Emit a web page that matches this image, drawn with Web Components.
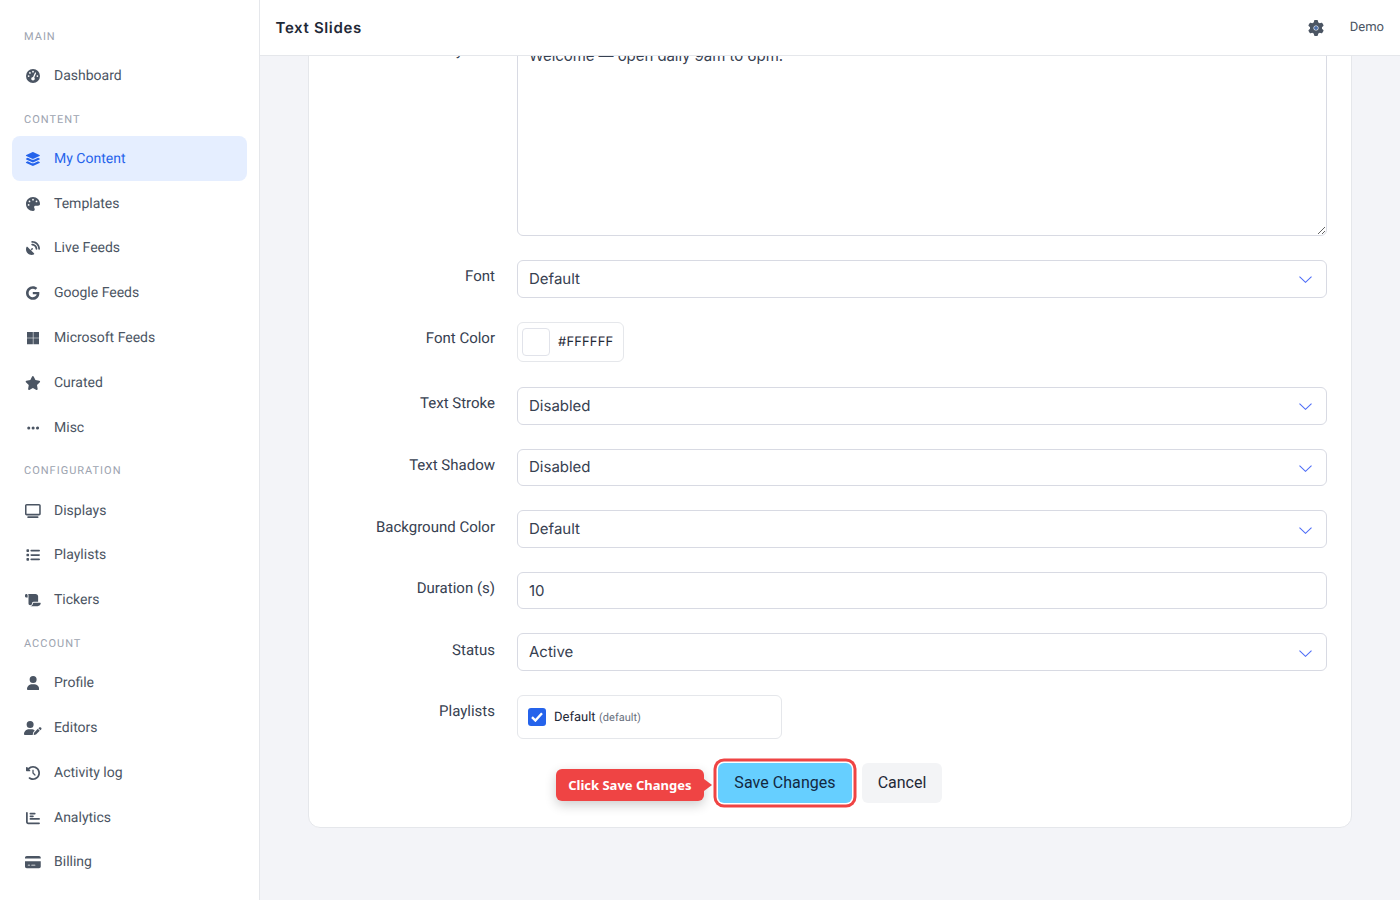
<!DOCTYPE html>
<html lang="en">
<head>
<meta charset="utf-8">
<title>Text Slides</title>
<style>
html, body { margin: 0; height: 100%; }
body { font-family: Roboto, "Liberation Sans", sans-serif; background: #f3f4f8; overflow: hidden; text-rendering: geometricPrecision; }
</style>
</head>
<body>
<app-shell>
  <side-nav slot="side">
    <nav-section label="MAIN" first>
      <nav-item icon="gauge">Dashboard</nav-item>
    </nav-section>
    <nav-section label="CONTENT">
      <nav-item icon="layers" active>My Content</nav-item>
      <nav-item icon="palette">Templates</nav-item>
      <nav-item icon="dish">Live Feeds</nav-item>
      <nav-item icon="google">Google Feeds</nav-item>
      <nav-item icon="windows">Microsoft Feeds</nav-item>
      <nav-item icon="star">Curated</nav-item>
      <nav-item icon="dots">Misc</nav-item>
    </nav-section>
    <nav-section label="CONFIGURATION">
      <nav-item icon="desktop">Displays</nav-item>
      <nav-item icon="list">Playlists</nav-item>
      <nav-item icon="scroll">Tickers</nav-item>
    </nav-section>
    <nav-section label="ACCOUNT">
      <nav-item icon="user">Profile</nav-item>
      <nav-item icon="useredit">Editors</nav-item>
      <nav-item icon="history">Activity log</nav-item>
      <nav-item icon="chart">Analytics</nav-item>
      <nav-item icon="card">Billing</nav-item>
      <nav-item icon="user"></nav-item>
    </nav-section>
  </side-nav>
  <top-bar slot="top" heading="Text Slides" account="Demo"></top-bar>
  <form-card>
    <form-row label="Body Text" style="--label-top:3.5px"><text-area-field>Welcome — open daily 9am to 6pm.</text-area-field></form-row>
    <form-row label="Font"><select-field>Default</select-field></form-row>
    <form-row label="Font Color" style="--row-gap:25.4px"><color-field value="#FFFFFF"></color-field></form-row>
    <form-row label="Text Stroke"><select-field>Disabled</select-field></form-row>
    <form-row label="Text Shadow"><select-field>Disabled</select-field></form-row>
    <form-row label="Background Color"><select-field>Default</select-field></form-row>
    <form-row label="Duration (s)"><text-field>10</text-field></form-row>
    <form-row label="Status"><select-field>Active</select-field></form-row>
    <form-row label="Playlists"><check-field note="(default)">Default</check-field></form-row>
    <form-actions></form-actions>
  </form-card>
</app-shell>

<script>
const ICONS = {
  gauge: ["0 0 512 512", "M0 256a256 256 0 1 1 512 0A256 256 0 1 1 0 256zM288 96a32 32 0 1 0 -64 0 32 32 0 1 0 64 0zM256 416c35.3 0 64-28.7 64-64c0-17.4-6.9-33.1-18.1-44.6L366 161.7c5.3-12.1-.2-26.3-12.3-31.6s-26.3 .2-31.6 12.3L257.9 288c-.6 0-1.3 0-1.9 0c-35.3 0-64 28.7-64 64s28.7 64 64 64zM176 144a32 32 0 1 0 -64 0 32 32 0 1 0 64 0zM96 288a32 32 0 1 0 0-64 32 32 0 1 0 0 64zm352-32a32 32 0 1 0 -64 0 32 32 0 1 0 64 0z"],
  layers: ["0 0 576 512", "M264.5 5.2c14.9-6.9 32.1-6.9 47 0l218.6 101c8.5 3.9 13.9 12.4 13.9 21.8s-5.4 17.9-13.9 21.8l-218.6 101c-14.9 6.9-32.1 6.9-47 0L45.9 149.8C37.4 145.8 32 137.3 32 128s5.4-17.9 13.9-21.8L264.5 5.2zM476.9 209.6l53.2 24.6c8.5 3.9 13.9 12.4 13.9 21.8s-5.4 17.9-13.9 21.8l-218.6 101c-14.9 6.9-32.1 6.9-47 0L45.9 277.8C37.4 273.8 32 265.3 32 256s5.4-17.9 13.9-21.8l53.2-24.6 152 70.2c23.4 10.8 50.4 10.8 73.8 0l152-70.2zm-152 198.2l152-70.2 53.2 24.6c8.5 3.9 13.9 12.4 13.9 21.8s-5.4 17.9-13.9 21.8l-218.6 101c-14.9 6.9-32.1 6.9-47 0L45.9 405.8C37.4 401.8 32 393.3 32 384s5.4-17.9 13.9-21.8l53.2-24.6 152 70.2c23.4 10.8 50.4 10.8 73.8 0z"],
  palette: ["0 0 512 512", "M512 256c0 .9 0 1.8 0 2.7c-.4 36.5-33.6 61.3-70.1 61.3H344c-26.5 0-48 21.5-48 48c0 3.4 .4 6.7 1 9.9c2.1 10.2 6.5 20 10.8 29.9c6.1 13.8 12.1 27.5 12.1 42c0 31.8-21.6 60.7-53.4 62c-3.5 .1-7 .2-10.6 .2C114.6 512 0 397.4 0 256S114.6 0 256 0S512 114.6 512 256zM128 288a32 32 0 1 0 -64 0 32 32 0 1 0 64 0zm0-96a32 32 0 1 0 0-64 32 32 0 1 0 0 64zM288 96a32 32 0 1 0 -64 0 32 32 0 1 0 64 0zm96 96a32 32 0 1 0 0-64 32 32 0 1 0 0 64z"],
  dish: ["0 0 512 512", "M192 32c0-17.7 14.3-32 32-32C383.1 0 512 128.9 512 288c0 17.7-14.3 32-32 32s-32-14.3-32-32C448 164.3 347.7 64 224 64c-17.7 0-32-14.3-32-32zM60.6 220.6L164.7 324.7l28.4-28.4c-.7-2.6-1.1-5.4-1.1-8.3c0-17.7 14.3-32 32-32s32 14.3 32 32s-14.3 32-32 32c-2.9 0-5.6-.4-8.3-1.1l-28.4 28.4L291.4 451.4c14.5 14.5 11.8 38.8-7.3 46.3C260.5 506.9 234.9 512 208 512C93.1 512 0 418.9 0 304c0-26.9 5.1-52.5 14.3-76.1c7.5-19.1 31.8-21.8 46.3-7.3zM224 96c106 0 192 86 192 192c0 17.7-14.3 32-32 32s-32-14.3-32-32c0-70.7-57.3-128-128-128c-17.7 0-32-14.3-32-32s14.3-32 32-32z"],
  google: ["0 0 488 512", "M488 261.8C488 403.3 391.1 504 248 504 110.8 504 0 393.2 0 256S110.8 8 248 8c66.8 0 123 24.5 166.3 64.9l-67.5 64.9C258.5 52.6 94.3 116.6 94.3 256c0 86.5 69.1 156.6 153.7 156.6 98.2 0 135-70.4 140.8-106.9H248v-85.3h236.1c2.3 12.7 3.9 24.9 3.9 41.4z"],
  windows: ["0 0 448 512", "M0 32h214v214H0zM234 32h214v214H234zM0 266h214v214H0zM234 266h214v214H234z"],
  star: ["0 0 576 512", "M316.9 18C311.6 7 300.4 0 288.1 0s-23.4 7-28.8 18L195 150.3 51.4 171.5c-12 1.8-22 10.2-25.7 21.7s-.7 24.2 7.9 32.7L137.8 329 113.2 474.7c-2 12 3 24.2 12.9 31.3s23 8 33.8 2.3l128.3-68.5 128.3 68.5c10.8 5.7 23.9 4.9 33.8-2.3s14.9-19.3 12.9-31.3L438.5 329 542.7 225.9c8.6-8.5 11.7-21.2 7.9-32.7s-13.7-19.9-25.7-21.7L381.2 150.3 316.9 18z"],
  dots: ["0 0 448 512", "M8 256a56 56 0 1 1 112 0A56 56 0 1 1 8 256zm160 0a56 56 0 1 1 112 0A56 56 0 1 1 168 256zm216-56a56 56 0 1 1 0 112 56 56 0 1 1 0-112z"],
  desktop: ["0 0 576 512", "M64 0C28.7 0 0 28.7 0 64V352c0 35.3 28.7 64 64 64H512c35.3 0 64-28.7 64-64V64c0-35.3-28.7-64-64-64H64zM64 56H512c4.4 0 8 3.6 8 8V352c0 4.4-3.6 8-8 8H64c-4.4 0-8-3.6-8-8V64c0-4.4 3.6-8 8-8zM112 448H464c17.7 0 32 14.3 32 32s-14.3 32-32 32H112c-17.700 0-32-14.300-32-32s14.300-32 32-32z"],
  list: ["0 0 512 512", "M40 48C26.700 48 16 58.700 16 72v48c0 13.300 10.700 24 24 24H88c13.300 0 24-10.700 24-24V72c0-13.300-10.700-24-24-24H40zM192 64c-17.700 0-32 14.300-32 32s14.300 32 32 32H480c17.700 0 32-14.300 32-32s-14.300-32-32-32H192zm0 160c-17.700 0-32 14.300-32 32s14.300 32 32 32H480c17.700 0 32-14.300 32-32s-14.300-32-32-32H192zm0 160c-17.700 0-32 14.300-32 32s14.300 32 32 32H480c17.700 0 32-14.300 32-32s-14.300-32-32-32H192zM16 232v48c0 13.300 10.700 24 24 24H88c13.300 0 24-10.700 24-24V232c0-13.300-10.700-24-24-24H40c-13.300 0-24 10.700-24 24zM40 368c-13.300 0-24 10.700-24 24v48c0 13.300 10.700 24 24 24H88c13.300 0 24-10.700 24-24V392c0-13.300-10.700-24-24-24H40z"],
  scroll: ["0 0 576 512", "M0 80v48c0 17.7 14.3 32 32 32H48 96V80c0-26.5-21.5-48-48-48S0 53.5 0 80zM112 32c10 13.4 16 30 16 48V384c0 35.3 28.7 64 64 64s64-28.7 64-64v-5.3c0-32.4 26.3-58.7 58.7-58.7H480V128c0-53-43-96-96-96H112zM464 480c61.9 0 112-50.1 112-112c0-8.8-7.2-16-16-16H314.7c-14.7 0-26.7 11.9-26.7 26.7V384c0 53-43 96-96 96H368h96z"],
  user: ["0 0 448 512", "M224 256A128 128 0 1 0 224 0a128 128 0 1 0 0 256zm-45.7 48C79.8 304 0 383.8 0 482.3C0 498.7 13.3 512 29.7 512H418.3c16.4 0 29.7-13.3 29.7-29.7C448 383.8 368.2 304 269.7 304H178.3z"],
  useredit: ["0 0 640 512", "M224 256A128 128 0 1 0 224 0a128 128 0 1 0 0 256zm-45.7 48C79.8 304 0 383.8 0 482.3C0 498.7 13.3 512 29.7 512H322.8c-3.1-8.8-3.7-18.4-1.4-27.8l15-60.1c2.8-11.3 8.6-21.5 16.8-29.7l40.3-40.3c-32.1-31-75.7-50.1-123.9-50.1H178.3zm435.5-68.3c-15.6-15.6-40.9-15.6-56.6 0l-29.4 29.4 71 71 29.4-29.4c15.6-15.6 15.6-40.9 0-56.6l-14.4-14.4zM375.9 417c-4.1 4.1-7 9.2-8.4 14.9l-15 60.1c-1.4 5.5 .2 11.2 4.2 15.2s9.7 5.6 15.2 4.2l60.1-15c5.6-1.4 10.8-4.3 14.9-8.4L576.1 358.7l-71-71L375.9 417z"],
  history: ["0 0 512 512", "M75 75L41 41C25.9 25.9 0 36.6 0 57.9V168c0 13.3 10.7 24 24 24H134.1c21.4 0 32.1-25.9 17-41l-30.8-30.8C155 85.5 203 64 256 64c106 0 192 86 192 192s-86 192-192 192c-40.8 0-78.6-12.7-109.7-34.4c-14.5-10.1-34.4-6.6-44.6 7.9s-6.6 34.4 7.9 44.6C151.2 495 201.7 512 256 512c141.4 0 256-114.6 256-256S397.4 0 256 0C185.3 0 121.3 28.7 75 75zm181 53c-13.3 0-24 10.7-24 24V256c0 6.4 2.5 12.5 7 17l72 72c9.4 9.4 24.6 9.4 33.9 0s9.4-24.6 0-33.9l-65-65V152c0-13.3-10.7-24-24-24z"],
  chart: ["0 0 512 512", "M32 32c17.7 0 32 14.3 32 32V400c0 8.8 7.2 16 16 16H480c17.7 0 32 14.3 32 32s-14.3 32-32 32H80c-44.2 0-80-35.8-80-80V64C0 46.3 14.3 32 32 32zm96 64c0-17.7 14.3-32 32-32H320c17.7 0 32 14.300 32 32s-14.300 32-32 32H160c-17.7 0-32-14.300-32-32zm32 64H256c17.700 0 32 14.300 32 32s-14.300 32-32 32H160c-17.700 0-32-14.300-32-32s14.300-32 32-32zm0 96H480c17.700 0 32 14.300 32 32s-14.300 32-32 32H160c-17.700 0-32-14.300-32-32s14.300-32 32-32z"],
  card: ["0 0 576 512", "M64 32C28.7 32 0 60.7 0 96v32H576V96c0-35.3-28.7-64-64-64H64zM576 224H0V416c0 35.3 28.7 64 64 64H512c35.3 0 64-28.7 64-64V224zM112 352h64c8.8 0 16 7.2 16 16s-7.2 16-16 16H112c-8.8 0-16-7.2-16-16s7.2-16 16-16zm112 16c0-8.8 7.2-16 16-16H368c8.8 0 16 7.2 16 16s-7.2 16-16 16H240c-8.8 0-16-7.2-16-16z"],
  gear: ["0 0 512 512", "M495.9 166.6c3.2 8.7 .5 18.4-6.4 24.6l-43.3 39.4c1.1 8.3 1.7 16.8 1.7 25.4s-.6 17.1-1.7 25.4l43.3 39.4c6.9 6.2 9.6 15.9 6.4 24.6c-4.4 11.9-9.7 23.3-15.8 34.3l-4.7 8.1c-6.6 11-14 21.4-22.1 31.2c-5.9 7.2-15.7 9.6-24.5 6.8l-55.7-17.7c-13.4 10.3-28.2 18.9-44 25.4l-12.5 57.1c-2 9.1-9 16.3-18.2 17.8c-13.8 2.3-28 3.5-42.5 3.5s-28.7-1.2-42.5-3.5c-9.2-1.5-16.2-8.7-18.2-17.8l-12.5-57.1c-15.8-6.5-30.6-15.1-44-25.4L83.1 425.9c-8.8 2.8-18.6 .3-24.5-6.8c-8.1-9.8-15.5-20.2-22.1-31.2l-4.7-8.1c-6.1-11-11.4-22.4-15.8-34.3c-3.2-8.7-.5-18.4 6.4-24.6l43.3-39.4C64.6 273.1 64 264.6 64 256s.6-17.1 1.7-25.4L22.4 191.2c-6.9-6.2-9.6-15.9-6.4-24.6c4.4-11.9 9.7-23.3 15.8-34.3l4.7-8.1c6.6-11 14-21.4 22.1-31.2c5.9-7.2 15.7-9.6 24.5-6.8l55.7 17.7c13.4-10.3 28.2-18.9 44-25.4l12.5-57.1c2-9.1 9-16.3 18.2-17.8C227.3 1.2 241.5 0 256 0s28.7 1.2 42.5 3.5c9.2 1.5 16.2 8.7 18.2 17.8l12.5 57.1c15.8 6.5 30.6 15.1 44 25.4l55.7-17.7c8.8-2.8 18.6-.3 24.5 6.8c8.1 9.8 15.5 20.2 22.1 31.2l4.7 8.1c6.1 11 11.4 22.4 15.8 34.3zM256 336a80 80 0 1 0 0-160 80 80 0 1 0 0 160z"]
};

function iconSvg(name, height) {
  const [box, d] = ICONS[name];
  const [, , w, h] = box.split(" ").map(Number);
  return `<svg viewBox="${box}" width="${height * w / h}" height="${height}" fill="currentColor" aria-hidden="true"><path d="${d}"/></svg>`;
}

// small base class, every element just renders a string once
class Base extends HTMLElement {
  constructor() {
    super();
    this.attachShadow({mode: "open"});
  }
  connectedCallback() {
    this.shadowRoot.innerHTML = this.render();
  }
}

customElements.define("app-shell", class extends Base {
  render() {
    return `<style>
      :host { display: grid; grid-template-columns: 260px 1fr; grid-template-rows: 56px 1fr; height: 100vh; overflow: hidden; }
      .side { grid-row: 1 / 3; min-height: 0; overflow: hidden; }
      main { display: flex; flex-direction: column; justify-content: flex-end; min-height: 0; overflow: hidden; padding: 0 48px 72px; }
    </style>
    <div class="side"><slot name="side"></slot></div>
    <slot name="top"></slot>
    <main><slot></slot></main>`;
  }
});

customElements.define("side-nav", class extends Base {
  render() {
    return `<style>
      :host { display: block; box-sizing: border-box; width: 260px; height: 100%; padding: 15.300px 12px 0; background: #fff; border-right: 1px solid #e5e7eb; overflow: hidden; }
    </style><slot></slot>`;
  }
});

customElements.define("nav-section", class extends Base {
  render() {
    return `<style>
      :host { display: block; }
      h3 { margin: 0; padding: 14.300px 12px 10.900px; font: 400 11px/13px Roboto, sans-serif; letter-spacing: 1px; color: #9ca3af; }
    </style><h3>${this.getAttribute("label")}</h3><slot></slot>`;
  }
});

customElements.define("nav-item", class extends Base {
  render() {
    return `<style>
      :host { display: flex; align-items: center; gap: 12px; height: 44.800px; padding-left: 12px; box-sizing: border-box; border-radius: 8px; font: 400 14px Roboto, sans-serif; color: #4b5563; }
      :host([active]) { background: #e5eeff; color: #2563eb; }
      .ic { display: flex; justify-content: center; align-items: center; width: 18px; flex: none; }
    </style><span class="ic">${iconSvg(this.getAttribute("icon"), 14)}</span><slot></slot>`;
  }
});

customElements.define("top-bar", class extends Base {
  render() {
    return `<style>
      :host { display: flex; align-items: center; box-sizing: border-box; height: 56px; padding: 0 16px 0 15.500px; background: #fff; border-bottom: 1px solid #e5e7eb; position: relative; z-index: 1; }
      h1 { flex: 1; margin: 0; font: 600 15px Inter, sans-serif; letter-spacing: .65px; color: #1f2937; }
      .gear { display: flex; position: relative; color: #4b5563; margin-right: 26px; }
      .gear i { position: absolute; left: 6px; top: 6px; width: 4px; height: 4px; border-radius: 50%; background: #4b6ea8; }
      .who { font: 400 13px Roboto, sans-serif; color: #4b5563; }
    </style>
    <h1>${this.getAttribute("heading")}</h1>
    <span class="gear">${iconSvg("gear", 16)}<i></i></span>
    <span class="who">${this.getAttribute("account")}</span>`;
  }
});

customElements.define("form-card", class extends Base {
  render() {
    return `<style>
      :host { display: block; flex: none; box-sizing: border-box; padding: 0 24px 24px; background: #fff; border: 1px solid #e5e7eb; border-radius: 12px; }
    </style><slot></slot>`;
  }
});

customElements.define("form-row", class extends Base {
  render() {
    return `<style>
      :host { display: grid; grid-template-columns: 162px 1fr; column-gap: 22px; margin-bottom: var(--row-gap, 24px); }
      label { padding-top: var(--label-top, 5.300px); text-align: right; font: 400 15px/22px Roboto, sans-serif; color: #374151; }
    </style><label>${this.getAttribute("label")}</label><div><slot></slot></div>`;
  }
});

const FIELD = `box-sizing: border-box; width: 100%; border: 1px solid #d8dae3; border-radius: 6px; background: #fff; font: 400 15px/22px Inter, sans-serif; color: #374151;`;

customElements.define("select-field", class extends Base {
  render() {
    return `<style>
      :host { display: flex; align-items: center; height: 37.600px; padding: 0 14.500px 0 11px; ${FIELD} }
      span { flex: 1; }
      svg { display: block; margin-top: 2px; }
    </style><span><slot></slot></span>
    <svg width="13" height="7" viewBox="0 0 13 7" fill="none" stroke="#4f6ef7" stroke-width="1.100"><path d="M.5.6 6.500 6.300 12.500.6"/></svg>`;
  }
});

customElements.define("text-field", class extends Base {
  render() {
    return `<style>
      :host { display: flex; align-items: center; height: 37.600px; padding: 0 11px; ${FIELD} }
    </style><slot></slot>`;
  }
});

customElements.define("text-area-field", class extends Base {
  render() {
    return `<style>
      :host { display: block; }
      textarea { display: block; height: 201px; padding: 8px 11px; margin: 0; outline: 0; resize: vertical; ${FIELD} line-height: 24px; letter-spacing: -.06px; }
    </style><textarea readonly>${this.textContent.trim()}</textarea>`;
  }
});

customElements.define("color-field", class extends Base {
  render() {
    return `<style>
      :host { display: inline-flex; align-items: center; gap: 8px; box-sizing: border-box; height: 40px; padding: 0 10px 0 4px; border: 1px solid #e5e7eb; border-radius: 6px; background: #fff; font: 400 13px Inter, sans-serif; letter-spacing: .15px; color: #1f2937; vertical-align: top; }
      i { display: block; width: 28px; height: 28px; box-sizing: border-box; border: 1px solid #e1e3ea; border-radius: 4px; }
    </style><i style="background:${this.getAttribute("value")}"></i><span>${this.getAttribute("value")}</span>`;
  }
});

customElements.define("check-field", class extends Base {
  render() {
    return `<style>
      :host { display: flex; align-items: center; box-sizing: border-box; width: 265px; height: 44px; padding: 0 10px; border: 1px solid #e5e7eb; border-radius: 6px; background: #fff; font: 400 13px Roboto, sans-serif; color: #1f2937; }
      .box { display: flex; align-items: center; justify-content: center; width: 18px; height: 18px; margin-right: 8px; border-radius: 3px; background: #2563eb; }
      small { margin-left: 3.500px; font-size: 11px; color: #6b7280; }
    </style><span class="box"><svg width="12" height="10" viewBox="0 0 12 10" fill="none" stroke="#fff" stroke-width="2.400"><path d="M1 5.200 4.400 8.500 11 1.200"/></svg></span><slot></slot><small>${this.getAttribute("note")}</small>`;
  }
});

customElements.define("form-actions", class extends Base {
  render() {
    return `<style>
      :host { display: flex; justify-content: center; gap: 10px; }
      button { height: 40px; padding: 0 0 1.500px; border: 0; border-radius: 6px; font: 400 16px Roboto, sans-serif; color: #1f2937; cursor: pointer; }
      .save { position: relative; width: 134px; background: #66cfff; color: #12283f; letter-spacing: .05px; box-shadow: 0 0 0 1.500px #fff, 0 0 0 4.500px #ef4444; }
      .cancel { width: 80px; background: #f3f4f6; }
      .tip { position: absolute; right: calc(100% + 14px); top: 6px; display: flex; align-items: center; height: 32px; padding: 0 12.500px; white-space: nowrap; border-radius: 6px; background: #ef4444; color: #fff; font: 700 13px "Noto Sans", sans-serif; letter-spacing: 0; box-shadow: 0 4px 12px rgba(0,0,0,.2); }
      .tip::after { content: ""; position: absolute; left: 100%; top: 10px; border: 6px solid transparent; border-left: 8px solid #ef4444; border-right: 0; }
    </style>
    <button class="save">Save Changes<span class="tip">Click Save Changes</span></button>
    <button class="cancel">Cancel</button>`;
  }
});
</script>
</body>
</html>
